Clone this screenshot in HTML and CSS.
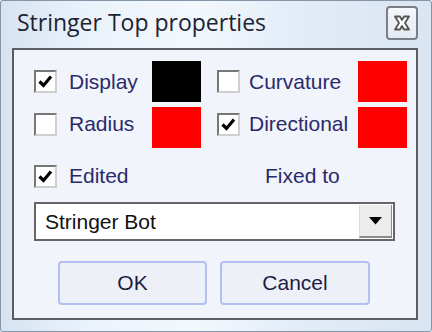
FILE: index.html
```html
<!DOCTYPE html>
<html lang="en">
<head>
    <meta charset="UTF-8">
    <title>Stringer Top properties</title>
    <link rel="stylesheet" href="styles.css">
</head>
<body>
    <div class="window">
        <div class="title-bar">
            <span class="title">Stringer Top properties</span>
            <span class="close-button">
                <svg width="18" height="16" viewBox="0 0 18 16">
                    <path d="M2 1.5 H7 L9 5 L11 1.5 H16 L12 8 L16 14.5 H11 L9 11 L7 14.5 H2 L6 8 Z" fill="#fff" stroke="#555" stroke-width="1.8" stroke-linejoin="round"/>
                </svg>
            </span>
        </div>

        <div class="client">
            <!-- Display options -->
            <div class="prop-row">
                <span class="check checked"><svg width="19" height="19" viewBox="0 0 19 19"><polyline points="3.5,9.5 7.5,13.5 15,4.5" fill="none" stroke="#000" stroke-width="3.2"/></svg></span>
                <span class="label">Display</span>
                <span class="swatch black"></span>
                <span></span>
                <span class="check"></span>
                <span class="label">Curvature</span>
                <span class="swatch red"></span>
            </div>
            <div class="prop-row lower">
                <span class="check"></span>
                <span class="label">Radius</span>
                <span class="swatch red"></span>
                <span></span>
                <span class="check checked"><svg width="19" height="19" viewBox="0 0 19 19"><polyline points="3.5,9.5 7.5,13.5 15,4.5" fill="none" stroke="#000" stroke-width="3.2"/></svg></span>
                <span class="label">Directional</span>
                <span class="swatch red"></span>
            </div>

            <div class="edited-row">
                <span class="check checked"><svg width="19" height="19" viewBox="0 0 19 19"><polyline points="3.5,9.5 7.5,13.5 15,4.5" fill="none" stroke="#000" stroke-width="3.2"/></svg></span>
                <span class="label">Edited</span>
                <span class="label fixed-label">Fixed to</span>
            </div>

            <div class="dropdown">
                <span class="dropdown-value">Stringer Bot</span>
                <span class="dropdown-arrow">
                    <svg width="13" height="8" viewBox="0 0 13 8"><path d="M0 0 H13 L6.5 7.5 Z" fill="#000"/></svg>
                </span>
            </div>

            <div class="buttons">
                <button class="dlg-button ok">OK</button>
                <button class="dlg-button cancel">Cancel</button>
            </div>
        </div>
    </div>
</body>
</html>
```

FILE: styles.css
```css
body {
    margin: 0;
    background-color: #dbe6f3;
    font-family: "Liberation Sans", Arial, sans-serif;
}

.window {
    width: 432px;
    height: 332px;
    box-sizing: border-box;
    border: 1px solid #8595a8;
    border-radius: 3px;
    background: linear-gradient(90deg, #d7e3f1 0%, #eaf2fb 20%, #f3f8fd 45%, #e2ecf7 70%, #d9e5f2 100%);
    display: flex;
    flex-direction: column;
}

.title-bar {
    height: 47px;
    display: flex;
    align-items: center;
    justify-content: space-between;
    padding: 0 13px 0 16px;
    box-sizing: border-box;
}

.title {
    font-family: "Open Sans", "Liberation Sans", sans-serif;
    font-size: 23px;
    color: #1c2433;
    margin-top: -6px;
}

.close-button {
    width: 32px;
    height: 34px;
    box-sizing: border-box;
    border: 2px solid #7b7e84;
    border-radius: 4px;
    background: linear-gradient(#f4f7fb, #e4eaf2);
    display: flex;
    align-items: center;
    justify-content: center;
    margin-top: -4px;
}

.client {
    margin: 0 13px 0 11px;
    height: 272px;
    box-sizing: border-box;
    border: 2px solid #5b5d62;
    background-color: #f1f4fa;
    padding: 11px 0 0 20px;
}

.prop-row {
    display: grid;
    grid-template-columns: 35px 83px 49px 16px 32px 109px 49px;
    align-items: center;
    height: 41px;
}

.prop-row.lower {
    margin-top: 5px;
}

.prop-row.lower .check,
.prop-row.lower .label {
    margin-bottom: 7px;
}

.check {
    width: 23px;
    height: 23px;
    box-sizing: border-box;
    border: 2px solid;
    border-color: #777 #cfcfcf #cfcfcf #777;
    background-color: #fff;
    display: flex;
    align-items: center;
    justify-content: center;
}

.label {
    font-size: 21px;
    color: #2b2a6c;
}

.swatch {
    height: 41px;
}

.swatch.black {
    background-color: #000;
}

.swatch.red {
    background-color: #ff0000;
}

.edited-row {
    display: grid;
    grid-template-columns: 35px 196px auto;
    align-items: center;
    margin-top: 16px;
    height: 23px;
}

.dropdown {
    width: 361px;
    height: 39px;
    box-sizing: border-box;
    margin-top: 15px;
    border: 2px solid #666;
    background-color: #fff;
    display: flex;
    align-items: center;
    justify-content: space-between;
    padding: 0 1px 0 9px;
}

.dropdown-value {
    font-size: 21px;
    color: #111;
}

.dropdown-arrow {
    width: 33px;
    height: 33px;
    box-sizing: border-box;
    background-color: #ececec;
    border-left: 1px solid #dedede;
    border-bottom: 2px solid #8a8a8a;
    border-right: 1px solid #8a8a8a;
    display: flex;
    align-items: center;
    justify-content: center;
}

.buttons {
    display: flex;
    gap: 13px;
    margin-top: 20px;
    padding-left: 24px;
}

.dlg-button {
    height: 44px;
    box-sizing: border-box;
    border: 2px solid #b3bff0;
    border-radius: 4px;
    background-color: #eef0f8;
    font-family: "Liberation Sans", Arial, sans-serif;
    font-size: 21px;
    color: #1d1d45;
    padding: 0;
}

.dlg-button.ok {
    width: 149px;
}

.dlg-button.cancel {
    width: 150px;
}
```
